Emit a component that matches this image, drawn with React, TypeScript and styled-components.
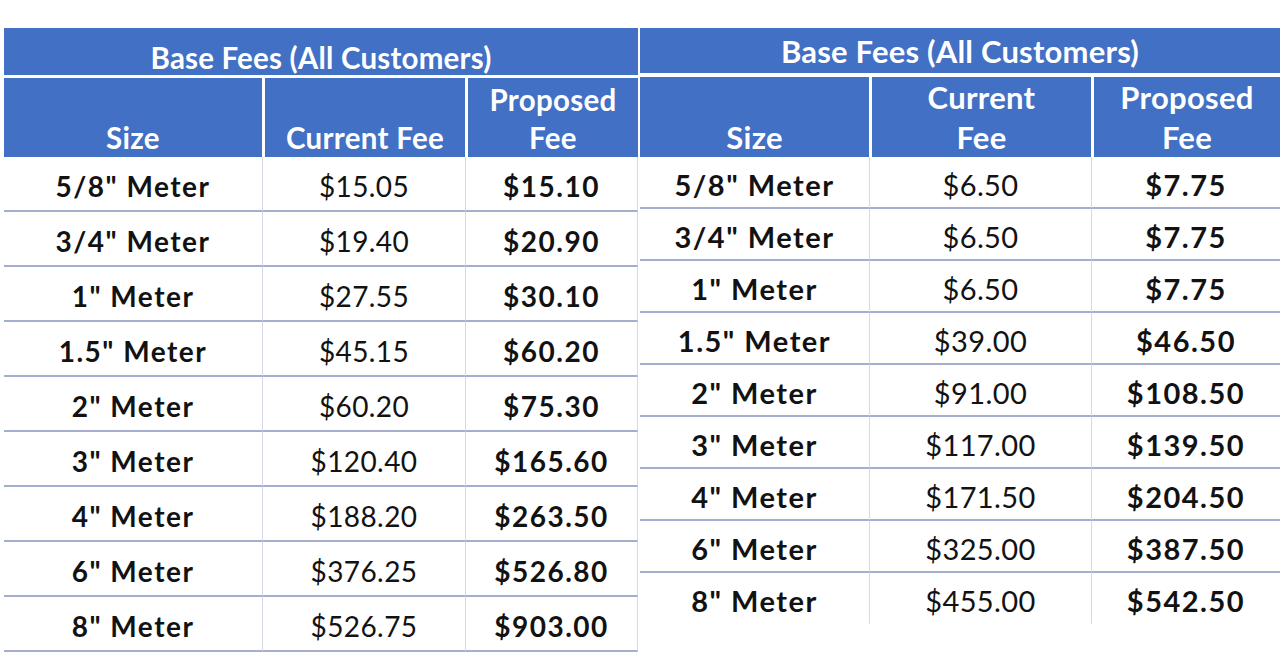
import React from "react";
import styled, { createGlobalStyle } from "styled-components";

const GlobalStyle = createGlobalStyle`
  html, body {
    margin: 0;
    padding: 0;
    background: #ffffff;
  }
  body {
    font-family: Lato, "Open Sans", "Liberation Sans", sans-serif;
    color: #111111;
  }
`;

const BLUE = "#4270c4";

const Page = styled.div`
  display: flex;
  align-items: flex-start;
  gap: 2px;
  padding: 28px 0 0 4px;
  width: 1280px;
  height: 672px;
  box-sizing: border-box;
  overflow: hidden;
`;

const Grid = styled.div<{ $cols: string }>`
  display: grid;
  grid-template-columns: ${(p) => p.$cols};
  flex: none;
`;

const Title = styled.div<{ $h: number; $gap: number; $fs: number; $pt: number }>`
  grid-column: 1 / -1;
  box-sizing: border-box;
  height: ${(p) => p.$h + p.$gap}px;
  padding-top: ${(p) => p.$pt}px;
  background: ${BLUE};
  background-clip: padding-box;
  border-bottom: ${(p) => p.$gap}px solid #ffffff;
  color: #ffffff;
  font-weight: 700;
  font-size: ${(p) => p.$fs}px;
  display: flex;
  align-items: center;
  justify-content: center;
  letter-spacing: 0.2px;
`;

const HeadCell = styled.div<{ $h: number; $lh: number; $fs: number }>`
  height: ${(p) => p.$h}px;
  background: ${BLUE};
  color: #ffffff;
  font-weight: 700;
  font-size: ${(p) => p.$fs}px;
  line-height: ${(p) => p.$lh}px;
  display: flex;
  flex-direction: column;
  justify-content: flex-end;
  align-items: center;
  text-align: center;
  letter-spacing: 0.3px;
  & + & {
    border-left: 3px solid #ffffff;
  }
`;

const Cell = styled.div<{
  $h: number;
  $fs: number;
  $bold: boolean;
  $first: boolean;
  $last: boolean;
  $edge: boolean;
  $line: boolean;
}>`
  height: ${(p) => p.$h}px;
  box-sizing: border-box;
  display: flex;
  align-items: center;
  justify-content: center;
  padding-top: 5px;
  font-size: ${(p) => p.$fs}px;
  font-weight: ${(p) => (p.$bold ? 700 : 400)};
  letter-spacing: ${(p) => (p.$bold ? "1.5px" : "0.4px")};
  color: #121212;
  border-bottom: ${(p) => (p.$line ? "2px solid #a6aed0" : "2px solid transparent")};
  border-left: ${(p) => (p.$first ? "none" : "1px solid #d6d9e7")};
  border-right: ${(p) => (p.$last && p.$edge ? "1px solid #d6d9e7" : "none")};
`;

type TableProps = {
  cols: string;
  titleH: number;
  titleGap: number;
  titlePt: number;
  headH: number;
  headLh: number;
  rowH: number;
  fs: number;
  headFs: number;
  headers: string[][];
  rows: string[][];
  edge: boolean;
  lastLine: boolean;
};

const bold = [true, false, true];

function FeeTable(p: TableProps) {
  return (
    <Grid $cols={p.cols}>
      <Title $h={p.titleH} $gap={p.titleGap} $fs={p.headFs} $pt={p.titlePt}>
        Base Fees (All Customers)
      </Title>
      {p.headers.map((lines, i) => (
        <HeadCell key={i} $h={p.headH} $lh={p.headLh} $fs={p.headFs}>
          {lines.map((l) => (
            <span key={l}>{l}</span>
          ))}
        </HeadCell>
      ))}
      {p.rows.map((r, ri) =>
        r.map((v, ci) => (
          <Cell
            key={`${ri}-${ci}`}
            $h={p.rowH}
            $fs={p.fs}
            $bold={bold[ci]}
            $first={ci === 0}
            $last={ci === r.length - 1}
            $edge={p.edge}
            $line={ri < p.rows.length - 1 || p.lastLine}
          >
            {v}
          </Cell>
        ))
      )}
    </Grid>
  );
}

const leftRows = [
  ['5/8" Meter', "$15.05", "$15.10"],
  ['3/4" Meter', "$19.40", "$20.90"],
  ['1" Meter', "$27.55", "$30.10"],
  ['1.5" Meter', "$45.15", "$60.20"],
  ['2" Meter', "$60.20", "$75.30"],
  ['3" Meter', "$120.40", "$165.60"],
  ['4" Meter', "$188.20", "$263.50"],
  ['6" Meter', "$376.25", "$526.80"],
  ['8" Meter', "$526.75", "$903.00"],
];

const rightRows = [
  ['5/8" Meter', "$6.50", "$7.75"],
  ['3/4" Meter', "$6.50", "$7.75"],
  ['1" Meter', "$6.50", "$7.75"],
  ['1.5" Meter', "$39.00", "$46.50"],
  ['2" Meter', "$91.00", "$108.50"],
  ['3" Meter', "$117.00", "$139.50"],
  ['4" Meter', "$171.50", "$204.50"],
  ['6" Meter', "$325.00", "$387.50"],
  ['8" Meter', "$455.00", "$542.50"],
];

export default function App() {
  return (
    <>
      <GlobalStyle />
      <Page>
        <FeeTable
          cols="258px 203px 173px"
          titleH={47}
          titleGap={3}
          titlePt={12}
          headH={79}
          headLh={38}
          rowH={55}
          fs={28}
          headFs={29.5}
          headers={[["Size"], ["Current Fee"], ["Proposed", "Fee"]]}
          rows={leftRows}
          edge={true}
          lastLine={true}
        />
        <FeeTable
          cols="229px 222px 189px"
          titleH={45}
          titleGap={4}
          titlePt={1}
          headH={80}
          headLh={40}
          rowH={52}
          fs={29}
          headFs={31}
          headers={[["Size"], ["Current", "Fee"], ["Proposed", "Fee"]]}
          rows={rightRows}
          edge={false}
          lastLine={false}
        />
      </Page>
    </>
  );
}
